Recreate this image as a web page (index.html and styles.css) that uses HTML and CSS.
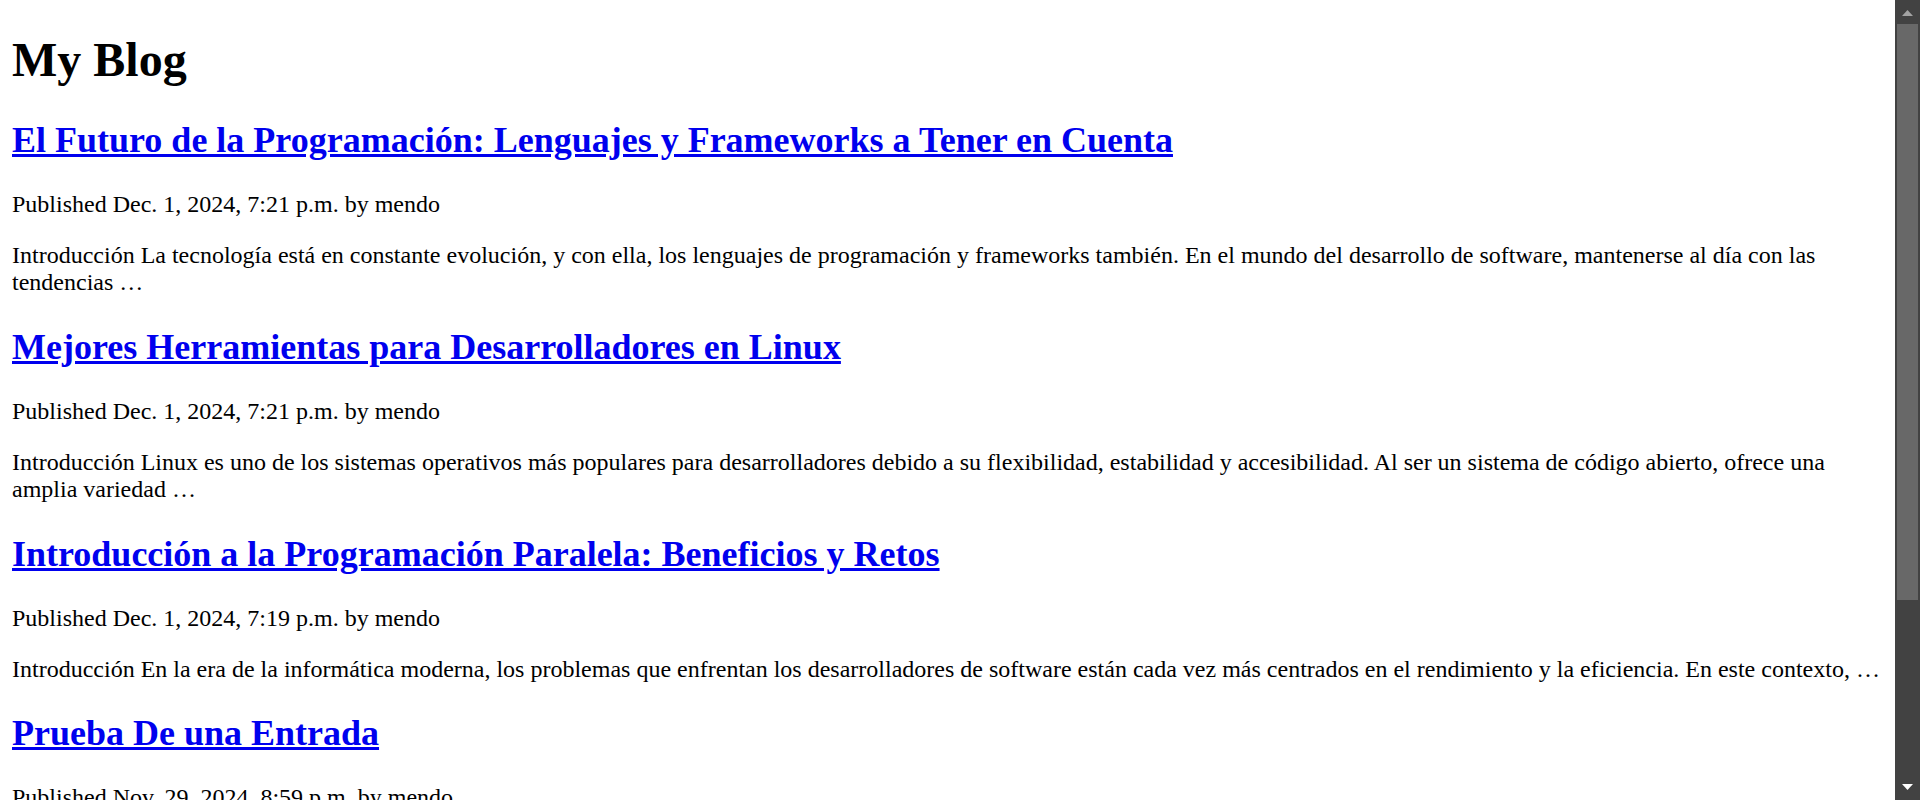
FILE: index.html
```html
<!DOCTYPE html>
<html lang="es">
<head>
<meta charset="utf-8">
<title>My Blog</title>
<link rel="stylesheet" href="styles.css">
</head>
<body>
<h1 class="site-title">My Blog</h1>
<div class="post">
  <h2 class="post-title"><a href="#">El Futuro de la Programación: Lenguajes y Frameworks a Tener en Cuenta</a></h2>
  <p class="post-meta">Published Dec. 1, 2024, 7:21 p.m. by mendo</p>
  <p class="post-excerpt">Introducción La tecnología está en constante evolución, y con ella, los lenguajes de programación y frameworks también. En el mundo del desarrollo de software, mantenerse al día con las tendencias …</p>
</div>
<div class="post">
  <h2 class="post-title"><a href="#">Mejores Herramientas para Desarrolladores en Linux</a></h2>
  <p class="post-meta">Published Dec. 1, 2024, 7:21 p.m. by mendo</p>
  <p class="post-excerpt">Introducción Linux es uno de los sistemas operativos más populares para desarrolladores debido a su flexibilidad, estabilidad y accesibilidad. Al ser un sistema de código abierto, ofrece una amplia variedad …</p>
</div>
<div class="post">
  <h2 class="post-title"><a href="#">Introducción a la Programación Paralela: Beneficios y Retos</a></h2>
  <p class="post-meta">Published Dec. 1, 2024, 7:19 p.m. by mendo</p>
  <p class="post-excerpt">Introducción En la era de la informática moderna, los problemas que enfrentan los desarrolladores de software están cada vez más centrados en el rendimiento y la eficiencia. En este contexto, …</p>
</div>
<div class="post">
  <h2 class="post-title"><a href="#">Prueba De una Entrada</a></h2>
  <p class="post-meta">Published Nov. 29, 2024, 8:59 p.m. by mendo</p>
  <p class="post-excerpt">Esta es una entrada de prueba …</p>
</div>

<div class="scrollbar" aria-hidden="true">
  <div class="sb-btn">
    <svg width="25" height="24" viewBox="0 0 25 24"><polygon points="7,16 12.5,10 18,16" fill="#a3a3a3"/></svg>
  </div>
  <div class="sb-track"><div class="sb-thumb"></div></div>
  <div class="sb-btn">
    <svg width="25" height="24" viewBox="0 0 25 24"><polygon points="7,8 18,8 12.5,14" fill="#ffffff"/></svg>
  </div>
</div>
</body>
</html>
```
FILE: styles.css
```css
html {
  background: #fff;
}
body {
  margin: 12px 37px 12px 12px;
  font-family: "Liberation Serif", "Times New Roman", serif;
  font-size: 24px;
  color: #000;
}
.site-title {
  font-size: 2em;
  font-weight: bold;
  margin: 20px 0 0.67em;
}
.post-title {
  font-size: 1.5em;
  font-weight: bold;
  margin: 0.83em 0;
}
.post-title a {
  color: #0000ee;
  text-decoration: underline;
}
.post-meta,
.post-excerpt {
  margin: 1em 0;
}
.scrollbar {
  position: fixed;
  top: 0;
  right: 0;
  width: 25px;
  height: 100vh;
  background: #424242;
  display: flex;
  flex-direction: column;
}
.sb-btn {
  height: 24px;
  flex: none;
}
.sb-btn svg {
  display: block;
}
.sb-track {
  flex: 1;
  padding: 0 2px;
}
.sb-thumb {
  height: 576px;
  background: #686868;
}
```
